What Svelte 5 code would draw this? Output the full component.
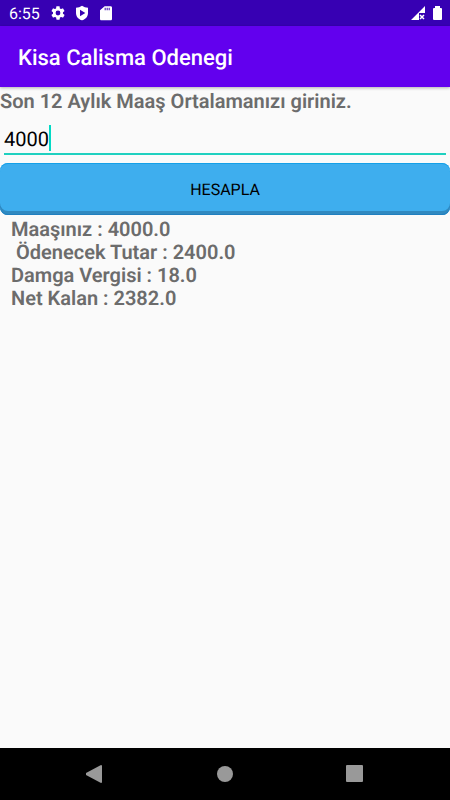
<script lang="ts">
    const taxRate = 0.00759;

    let salary = $state('4000');
    let result = $state({ salary: 4000, payment: 2400, tax: 18, net: 2382 });

    const format = (value: number) => value.toFixed(1);

    function calculate() {
        const amount = Number(salary) || 0;
        const payment = amount * 0.6;
        const tax = Math.floor(payment * taxRate);
        result = { salary: amount, payment, tax, net: payment - tax };
    }
</script>

<div class="screen">
    <div class="status-bar">
        <span class="clock">6:55</span>
        <div class="status-icons">
            <svg width="16" height="16" viewBox="0 0 24 24" aria-hidden="true">
                <path d="M19.4 13c0-.3.1-.6.1-1s0-.7-.1-1l2.1-1.6c.2-.2.3-.4.1-.6l-2-3.5c-.1-.2-.4-.3-.6-.2l-2.5 1c-.5-.4-1.1-.7-1.7-1l-.4-2.6c0-.3-.2-.5-.4-.5h-4c-.3 0-.5.2-.5.4l-.4 2.7c-.6.2-1.1.6-1.7 1L5 5.1c-.2-.1-.5 0-.6.2l-2 3.4c-.1.3-.1.5.1.7L4.6 11c0 .3-.1.7-.1 1s0 .7.1 1l-2.1 1.6c-.2.2-.3.4-.1.6l2 3.5c.1.2.4.3.6.2l2.5-1c.5.4 1.1.7 1.7 1l.4 2.6c0 .3.2.5.5.5h4c.2 0 .4-.2.4-.5l.4-2.6c.6-.3 1.2-.6 1.7-1l2.5 1c.2.1.5 0 .6-.2l2-3.5c.1-.2.1-.4-.1-.6zM12 15.600a3.600 3.600 0 1 1 0-7.200 3.600 3.600 0 0 1 0 7.200z" />
            </svg>
            <svg width="16" height="16" viewBox="0 0 24 24" aria-hidden="true">
                <path fill-rule="evenodd" d="M12 1Q8 4 3 4v8c0 5.600 3.800 9.700 9 11 5.200-1.300 9-5.400 9-11V4q-5 0-9-3zM9 7l8 5-8 5z" />
            </svg>
            <svg width="16" height="16" viewBox="0 0 24 24" aria-hidden="true">
                <path fill-rule="evenodd" d="M19 2h-9L3 8v13c0 1.100.9 2 2 2h14c1.100 0 2-.9 2-2V4c0-1.100-.9-2-2-2zM10 4v4h1.500V4zM13 4v4h1.500V4zM16 4v4h1.500V4z" />
            </svg>
        </div>
        <div class="system-icons">
            <svg width="16" height="16" viewBox="0 0 16 16" aria-hidden="true">
                <path d="M15 1v7H9v7H1z" />
                <path class="cross" d="M10 10l4 4M14 10l-4 4" />
            </svg>
            <svg width="11" height="16" viewBox="0 0 11 16" aria-hidden="true">
                <path d="M3 1h5v2h1a1 1 0 0 1 1 1v10a1 1 0 0 1-1 1H2a1 1 0 0 1-1-1V4a1 1 0 0 1 1-1h1z" />
            </svg>
        </div>
    </div>

    <header class="app-bar">
        <h1>Kisa Calisma Odenegi</h1>
    </header>

    <main>
        <label for="salary">Son 12 Aylık Maaş Ortalamanızı giriniz.</label>
        <div class="field">
            <input id="salary" type="text" inputmode="numeric" autocomplete="off" bind:value={salary} />
            <span class="caret" aria-hidden="true"><span>{salary}</span></span>
        </div>
        <button class="calculate" type="button" onclick={calculate}>HESAPLA</button>
        <div class="result">
            <p>Maaşınız : {format(result.salary)}</p>
            <p>&nbsp;Ödenecek Tutar : {format(result.payment)}</p>
            <p>Damga Vergisi : {format(result.tax)}</p>
            <p>Net Kalan : {format(result.net)}</p>
        </div>
    </main>

    <nav class="nav-bar">
        <button type="button" aria-label="Back">
            <svg width="18" height="18" viewBox="0 0 18 18"><path d="M15 0q1 0 1 1v16q0 1-1 1L0 10q-1-1 0-2z" /></svg>
        </button>
        <button type="button" aria-label="Home">
            <svg width="18" height="18" viewBox="0 0 18 18"><circle cx="9" cy="9" r="8" /></svg>
        </button>
        <button type="button" aria-label="Recent apps">
            <svg width="18" height="18" viewBox="0 0 18 18"><rect width="17" height="17" rx="1" /></svg>
        </button>
    </nav>
</div>

<style>
    :global(body) {
        margin: 0;
    }

    .screen {
        display: flex;
        flex-direction: column;
        min-height: 100vh;
        background: #fafafa;
        font-family: Roboto, sans-serif;
        text-rendering: geometricPrecision;
    }

    .status-bar {
        display: flex;
        align-items: center;
        height: 26px;
        padding: 0 7px 0 9px;
        background: #3700b3;
        color: #fff;
    }

    .status-bar svg {
        display: block;
        fill: #fff;
    }

    .clock {
        padding-top: 2px;
        font-size: 16px;
        line-height: 26px;
    }

    .status-icons {
        display: flex;
        gap: 8px;
        margin-left: 10px;
    }

    .system-icons {
        display: flex;
        gap: 6px;
        margin-left: auto;
    }

    .cross {
        stroke: #fff;
        stroke-width: 1.5;
    }

    .app-bar {
        display: flex;
        align-items: center;
        height: 61px;
        padding: 0 18px;
        background: #6200ee;
        box-shadow: 0 1px 3px rgba(0, 0, 0, 0.3);
    }

    h1 {
        margin: 0;
        padding-top: 4px;
        color: #fff;
        font-size: 22px;
        font-weight: 500;
        line-height: 28px;
    }

    main {
        flex: 1;
        display: flex;
        flex-direction: column;
        padding-top: 3px;
    }

    label,
    .result {
        color: #6c6c6c;
        font-size: 20px;
        font-weight: 600;
        line-height: 23px;
    }

    .field {
        position: relative;
        margin: 11px 4px 0;
        border-bottom: 2px solid #1fd0c0;
    }

    input {
        display: block;
        box-sizing: border-box;
        width: 100%;
        height: 29px;
        padding: 0;
        border: 0;
        outline: 0;
        background: transparent;
        color: #000;
        caret-color: transparent;
        font-family: inherit;
        font-size: 20px;
        line-height: 26px;
        text-rendering: inherit;
    }

    /* Insertion mark that follows the typed value */
    .caret {
        position: absolute;
        top: 1px;
        left: 0;
        box-sizing: border-box;
        border-right: 2px solid #03dac5;
        font-size: 20px;
        line-height: 26px;
        pointer-events: none;
    }

    .caret span {
        visibility: hidden;
    }

    .calculate {
        height: 52px;
        margin-top: 8px;
        padding: 2px 0 0;
        border: 0;
        border-radius: 8px;
        background: #3eaeee;
        box-shadow: inset 0 1px 0 #14a0e8, inset 0 -1px 0 #1f7fc0, inset 0 -4px 0 #3089c0;
        color: #000;
        font-family: inherit;
        font-size: 16px;
        line-height: 20px;
        text-rendering: inherit;
    }

    .result {
        padding: 3px 11px;
    }

    p {
        margin: 0;
    }

    .nav-bar {
        display: grid;
        grid-template-columns: repeat(3, 1fr);
        height: 52px;
        padding: 0 30px;
        background: #000;
    }

    .nav-bar button {
        display: flex;
        align-items: center;
        justify-content: center;
        padding: 0;
        border: 0;
        background: transparent;
    }

    .nav-bar svg {
        fill: #999;
    }
</style>
